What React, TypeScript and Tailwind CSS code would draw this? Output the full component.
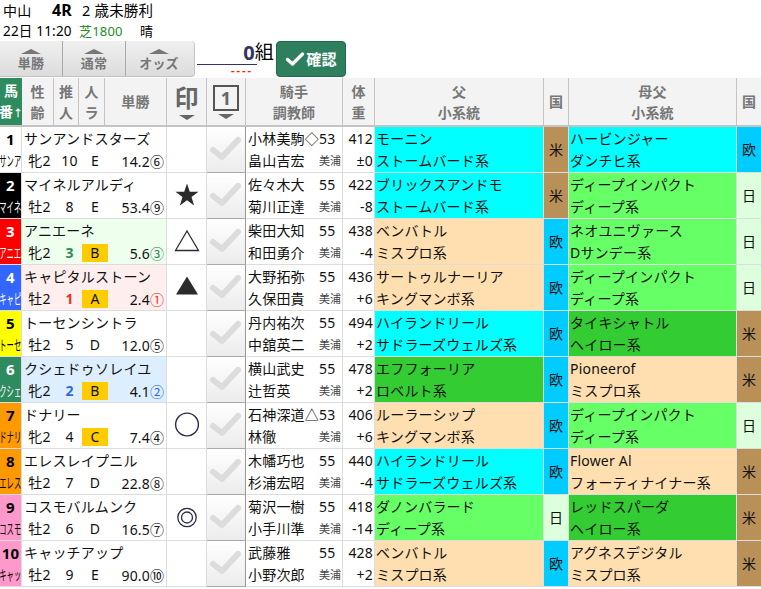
import React from "react";

const FONT = "font-['Noto_Sans','Noto_Sans_CJK_JP',sans-serif]";
const ROWGRID = "grid grid-cols-[22px_145px_40px_39px_97px_32px_169px_25px_168px_24px] grid-rows-[minmax(0,1fr)]";

const CY = "bg-[#00ffff]";
const TN = "bg-[#ffdfb0]";
const LG = "bg-[#66ff66]";
const DG = "bg-[#33cc33]";
const OU = "bg-[#00ccff]";
const BE = "bg-[#b89058]";
const NI = "bg-[#ddffdd]";

type Mark = "" | "star" | "tri" | "fill" | "circle" | "double";
type Row = {
  n: string; frame: string; short: string; name: string; sex: string; pop: string; grade: string;
  odds: string; rank: string; rankCls: string; popCls: string; nameBg: string; mark: Mark;
  jockey: string; kg: string; trainer: string; w: string; dw: string;
  f1: string; f2: string; fBg: string; fk: string; fkBg: string;
  m1: string; m2: string; mBg: string; mk: string; mkBg: string;
};

const base = { rankCls: "", popCls: "", nameBg: "bg-white" };

const rows: Row[] = [
  { ...base, n: "1", frame: "bg-white text-black", short: "サンア", name: "サンアンドスターズ", sex: "牝2", pop: "10", grade: "E", odds: "14.2", rank: "⑥", mark: "", jockey: "小林美駒◇", kg: "53", trainer: "畠山吉宏", w: "412", dw: "±0", f1: "モーニン", f2: "ストームバード系", fBg: CY, fk: "米", fkBg: BE, m1: "ハービンジャー", m2: "ダンチヒ系", mBg: CY, mk: "欧", mkBg: OU },
  { ...base, n: "2", frame: "bg-black text-white", short: "マイネ", name: "マイネルアルディ", sex: "牡2", pop: "8", grade: "E", odds: "53.4", rank: "⑨", mark: "star", jockey: "佐々木大", kg: "55", trainer: "菊川正達", w: "422", dw: "-8", f1: "ブリックスアンドモ", f2: "ストームバード系", fBg: CY, fk: "米", fkBg: BE, m1: "ディープインパクト", m2: "ディープ系", mBg: LG, mk: "日", mkBg: NI },
  { n: "3", frame: "bg-[#ff0000] text-white", short: "アニエ", name: "アニエーネ", sex: "牝2", pop: "3", grade: "B", odds: "5.6", rank: "③", rankCls: "text-[#2e8b57]", popCls: "text-[#2e8b57] font-bold", nameBg: "bg-[#eeffee]", mark: "tri", jockey: "柴田大知", kg: "55", trainer: "和田勇介", w: "438", dw: "-4", f1: "ベンバトル", f2: "ミスプロ系", fBg: TN, fk: "欧", fkBg: OU, m1: "ネオユニヴァース", m2: "Dサンデー系", mBg: LG, mk: "日", mkBg: NI },
  { n: "4", frame: "bg-[#3366ff] text-white", short: "キャピ", name: "キャピタルストーン", sex: "牡2", pop: "1", grade: "A", odds: "2.4", rank: "①", rankCls: "text-[#e8301c]", popCls: "text-[#e8301c] font-bold", nameBg: "bg-[#ffeeee]", mark: "fill", jockey: "大野拓弥", kg: "55", trainer: "久保田貴", w: "436", dw: "+6", f1: "サートゥルナーリア", f2: "キングマンボ系", fBg: TN, fk: "欧", fkBg: OU, m1: "ディープインパクト", m2: "ディープ系", mBg: LG, mk: "日", mkBg: NI },
  { ...base, n: "5", frame: "bg-[#ffff00] text-black", short: "トーセ", name: "トーセンシントラ", sex: "牡2", pop: "5", grade: "D", odds: "12.0", rank: "⑤", mark: "", jockey: "丹内祐次", kg: "55", trainer: "中舘英二", w: "494", dw: "+2", f1: "ハイランドリール", f2: "サドラーズウェルズ系", fBg: CY, fk: "欧", fkBg: OU, m1: "タイキシャトル", m2: "ヘイロー系", mBg: DG, mk: "米", mkBg: BE },
  { n: "6", frame: "bg-[#2e8b5f] text-white", short: "クシェ", name: "クシェドゥソレイユ", sex: "牝2", pop: "2", grade: "B", odds: "4.1", rank: "②", rankCls: "text-[#3366dd]", popCls: "text-[#3366dd] font-bold", nameBg: "bg-[#ddeeff]", mark: "", jockey: "横山武史", kg: "55", trainer: "辻哲英", w: "478", dw: "+2", f1: "エフフォーリア", f2: "ロベルト系", fBg: DG, fk: "欧", fkBg: OU, m1: "Pioneerof", m2: "ミスプロ系", mBg: TN, mk: "米", mkBg: BE },
  { ...base, n: "7", frame: "bg-[#ff9900] text-black", short: "ドナリ", name: "ドナリー", sex: "牝2", pop: "4", grade: "C", odds: "7.4", rank: "④", mark: "circle", jockey: "石神深道△", kg: "53", trainer: "林徹", w: "406", dw: "+6", f1: "ルーラーシップ", f2: "キングマンボ系", fBg: TN, fk: "欧", fkBg: OU, m1: "ディープインパクト", m2: "ディープ系", mBg: LG, mk: "日", mkBg: NI },
  { ...base, n: "8", frame: "bg-[#ff9900] text-black", short: "エレス", name: "エレスレイプニル", sex: "牡2", pop: "7", grade: "D", odds: "22.8", rank: "⑧", mark: "", jockey: "木幡巧也", kg: "55", trainer: "杉浦宏昭", w: "440", dw: "-4", f1: "ハイランドリール", f2: "サドラーズウェルズ系", fBg: CY, fk: "欧", fkBg: OU, m1: "Flower Al", m2: "フォーティナイナー系", mBg: TN, mk: "米", mkBg: BE },
  { ...base, n: "9", frame: "bg-[#ff99cc] text-black", short: "コスモ", name: "コスモバルムンク", sex: "牡2", pop: "6", grade: "D", odds: "16.5", rank: "⑦", mark: "double", jockey: "菊沢一樹", kg: "55", trainer: "小手川準", w: "418", dw: "-14", f1: "ダノンバラード", f2: "ディープ系", fBg: LG, fk: "日", fkBg: NI, m1: "レッドスパーダ", m2: "ヘイロー系", mBg: DG, mk: "米", mkBg: BE },
  { ...base, n: "10", frame: "bg-[#ff99cc] text-black", short: "キャッ", name: "キャッチアップ", sex: "牡2", pop: "9", grade: "E", odds: "90.0", rank: "⑩", mark: "", jockey: "武藤雅", kg: "55", trainer: "小野次郎", w: "428", dw: "+2", f1: "ベンバトル", f2: "ミスプロ系", fBg: TN, fk: "欧", fkBg: OU, m1: "アグネスデジタル", m2: "ミスプロ系", mBg: TN, mk: "米", mkBg: BE },
];

function MarkIcon({ mark }: { mark: Mark }) {
  if (!mark) return null;
  return (
    <svg width="28" height="28" viewBox="0 0 28 28">
      {mark === "star" && <polygon points="14,1.5 16.8,9.8 25.5,9.8 18.5,15 21.1,23.5 14,18.3 6.9,23.5 9.5,15 2.5,9.8 11.2,9.8" fill="#2b2b2b" />}
      {mark === "tri" && <polygon points="14,3 25.5,22.5 2.5,22.5" fill="none" stroke="#2b2b3c" strokeWidth="1.3" />}
      {mark === "fill" && <polygon points="14,2.5 25,20.5 3,20.5" fill="#2b2b2b" />}
      {mark === "circle" && <circle cx="14" cy="12.5" r="11.4" fill="none" stroke="#2b2b4c" strokeWidth="1.4" />}
      {mark === "double" && (
        <>
          <circle cx="14" cy="13.5" r="9.2" fill="none" stroke="#2b2b4c" strokeWidth="1.3" />
          <circle cx="14" cy="13.5" r="5.5" fill="none" stroke="#2b2b4c" strokeWidth="1.3" />
        </>
      )}
    </svg>
  );
}

function TabButton({ label, last }: { label: string; last?: boolean }) {
  return (
    <div className={`flex flex-col items-center pt-[8px] h-full ${last ? "w-[66px]" : "w-[63px] border-r border-[#aaaaaa]"}`}>
      <div className="w-0 h-0 border-x-[10px] border-x-transparent border-b-[5px] border-b-[#777777]" />
      <div className="text-[13px] leading-[18px] font-bold text-[#777777]">{label}</div>
    </div>
  );
}

function HeadCell({ children, cls = "" }: { children: React.ReactNode; cls?: string }) {
  return (
    <div className={`flex flex-col items-center justify-center border-r border-[#c4c4c4] text-[14px] leading-[21px] font-bold text-[#777777] ${cls}`}>
      {children}
    </div>
  );
}

function Arrow() {
  return <div className="w-0 h-0 border-x-[8px] border-x-transparent border-t-[5px] border-t-[#666666]" />;
}

function CheckCell() {
  return (
    <div className="flex items-center justify-center border-r border-b border-r-[#999999] border-b-[#aaaaaa] bg-gradient-to-b from-white to-[#ececec]">
      <svg width="38" height="45" viewBox="0 0 38 45">
        <polyline points="6,23 15,30 31,13" fill="none" stroke="#dcdcdc" strokeWidth="6" strokeLinecap="round" strokeLinejoin="round" />
      </svg>
    </div>
  );
}

function HorseRow({ r }: { r: Row }) {
  return (
    <div className={`${ROWGRID} h-[46px] text-[14px] leading-[22px] text-[#111111]`}>
      <div className={`flex flex-col items-center justify-center overflow-hidden border-r border-b border-[#dddddd] ${r.frame}`}>
        <div className="text-[15px] leading-[22px] font-bold">{r.n}</div>
        <div className="text-[14px] leading-[22px] whitespace-nowrap scale-x-[0.52]">{r.short}</div>
      </div>
      <div className={`flex flex-col justify-center border-r border-b border-[#dddddd] ${r.nameBg}`}>
        <div className="pl-[2px] whitespace-nowrap">{r.name}</div>
        <div className="grid grid-cols-[35px_25px_26px_1fr] items-center h-[22px] ">
          <div className="text-center">{r.sex}</div>
          <div className={`text-center ${r.popCls}`}>{r.pop}</div>
          <div className={`text-center leading-[18px] h-[18px] ${r.grade === "A" || r.grade === "B" || r.grade === "C" ? "bg-[#ffcc00]" : ""}`}>{r.grade}</div>
          <div className="text-right pr-[2px] whitespace-nowrap">
            {r.odds}
            <span className={`font-['Noto_Sans_CJK_JP',sans-serif] tracking-[0px] ${r.rankCls}`}>{r.rank}</span>
          </div>
        </div>
      </div>
      <div className="flex items-center justify-center border-r border-b border-[#dddddd] bg-white">
        <MarkIcon mark={r.mark} />
      </div>
      <CheckCell />
      <div className="flex flex-col justify-center border-r border-b border-[#dddddd] pl-[2px] bg-white">
        <div className="grid grid-cols-[71px_1fr]">
          <div className="whitespace-nowrap">{r.jockey}</div>
          <div>{r.kg}</div>
        </div>
        <div className="grid grid-cols-[71px_1fr]">
          <div className="whitespace-nowrap">{r.trainer}</div>
          <div className="text-[11px] whitespace-nowrap tracking-[0px] text-[#444444]">美浦</div>
        </div>
      </div>
      <div className="flex flex-col justify-center items-end border-r border-b border-[#dddddd] pr-[1px] bg-white">
        <div>{r.w}</div>
        <div>{r.dw}</div>
      </div>
      <div className={`flex flex-col justify-center border-r border-b border-[#dddddd] pl-[1px] whitespace-nowrap ${r.fBg}`}>
        <div>{r.f1}</div>
        <div>{r.f2}</div>
      </div>
      <div className={`flex items-center justify-center border-r border-b border-[#dddddd] ${r.fkBg}`}>{r.fk}</div>
      <div className={`flex flex-col justify-center border-r border-b border-[#dddddd] pl-[1px] whitespace-nowrap ${r.mBg}`}>
        <div>{r.m1}</div>
        <div>{r.m2}</div>
      </div>
      <div className={`flex items-center justify-center border-b border-[#dddddd] ${r.mkBg}`}>{r.mk}</div>
    </div>
  );
}

export default function App() {
  return (
    <div className={`w-[761px] h-[589px] overflow-hidden bg-white tracking-[0.2px] ${FONT}`}>
      <div className="h-[41px] pl-[3px] text-black">
        <div className="flex h-[21px] items-center text-[14px] leading-[21px]">
          <span className="w-[48px]">中山</span>
          <span className="w-[31px] pl-[1px] font-bold text-[16px]">4R</span>
          <span className="text-[14.5px] whitespace-nowrap">2 歳未勝利</span>
        </div>
        <div className="flex h-[20px] items-center text-[13px] leading-[20px]">
          <span className="w-[76px] text-[13.5px] whitespace-nowrap">22日 11:20</span>
          <span className="w-[61px] text-[#228b22] whitespace-nowrap">芝1800</span>
          <span>晴</span>
        </div>
      </div>

      <div className="flex h-[37px]">
        <div className="flex w-[195px] h-[36px] rounded-r-[4px] border-r border-b border-[#c4c4c4] bg-gradient-to-b from-[#f0f0f0] to-[#dcdcdc]">
          <TabButton label="単勝" />
          <TabButton label="通常" />
          <TabButton label="オッズ" last />
        </div>
        <div className="flex flex-col items-end w-[80px] pl-[2px]">
          <div className="flex items-center h-[23px] w-[78px] justify-end pr-[1px] text-[19px] leading-[23px]">
            <span className="font-bold text-[20px] leading-[23px] text-[#333366]">0</span>
            <span className="text-black">組</span>
          </div>
          <div className="flex w-[78px]">
            <div className="w-[60px] border-t border-[#333366]" />
          </div>
          <div className="flex w-[78px] h-[9px] pl-[34px] text-[#ff2200] font-bold text-[11px] leading-[9px] tracking-[2px]">----</div>
        </div>
        <div className="ml-[1px] flex items-center justify-center gap-[1px] w-[70px] h-[36px] rounded-[4px] border border-[#1f6a4b] bg-[#2e7f5e] text-white font-bold text-[15px]">
          <svg width="20" height="16" viewBox="0 0 20 16">
            <polyline points="2.5,8.5 7.5,13 17.5,3" fill="none" stroke="#ffffff" strokeWidth="3.4" strokeLinecap="round" strokeLinejoin="round" />
          </svg>
          確認
        </div>
      </div>

      <div className={`${ROWGRID} h-[49px] bg-[#f3f3f3] border-b-2 border-[#c4c4c4]`}>
        <div className="flex flex-col items-center justify-center overflow-hidden bg-[#2e8b5f] text-white text-[14px] leading-[21px] font-bold">
          <div>馬</div>
          <div className="whitespace-nowrap tracking-[0px]">番<span className="text-[10px]">↑</span></div>
        </div>
        <div className="grid grid-cols-[32px_25px_26px_62px]">
          <HeadCell><div>性</div><div>齢</div></HeadCell>
          <HeadCell><div>推</div><div>人</div></HeadCell>
          <HeadCell><div>人</div><div>ラ</div></HeadCell>
          <HeadCell>単勝</HeadCell>
        </div>
        <HeadCell cls="gap-[4px]">
          <div className="text-[24px] leading-[27px] text-[#666666]">印</div>
          <Arrow />
        </HeadCell>
        <HeadCell cls="gap-[3px]">
          <div className="flex items-center justify-center w-[26px] h-[26px] border-2 border-[#555555] text-[18px] leading-none text-[#666666]">1</div>
          <Arrow />
        </HeadCell>
        <HeadCell><div>騎手</div><div>調教師</div></HeadCell>
        <HeadCell><div>体</div><div>重</div></HeadCell>
        <HeadCell><div>父</div><div>小系統</div></HeadCell>
        <HeadCell>国</HeadCell>
        <HeadCell><div>母父</div><div>小系統</div></HeadCell>
        <HeadCell cls="border-r-0">国</HeadCell>
      </div>

      {rows.map((r) => (
        <HorseRow key={r.n} r={r} />
      ))}
    </div>
  );
}
